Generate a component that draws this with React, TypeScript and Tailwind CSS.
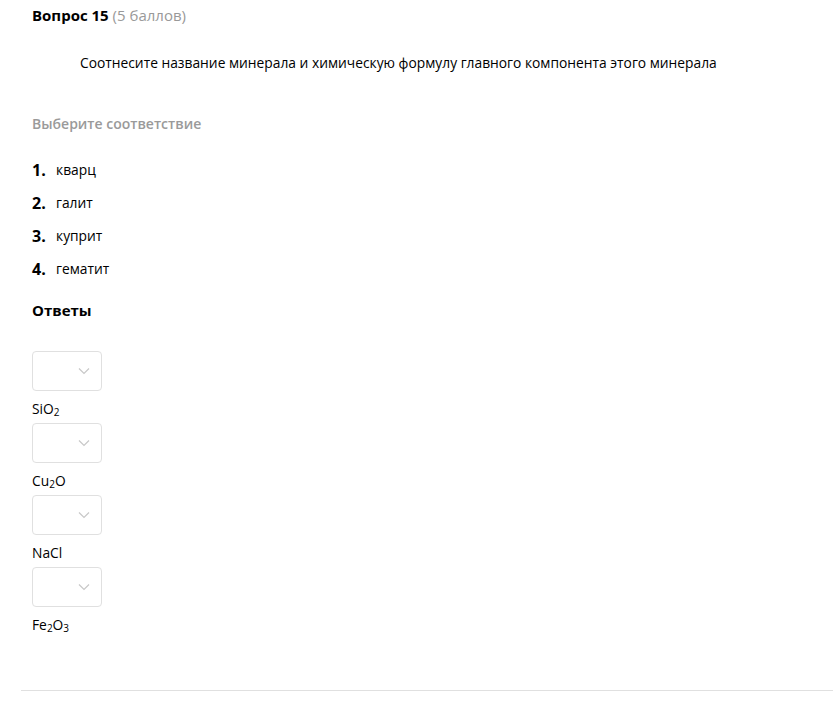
import React from 'react'

const items = ['кварц', 'галит', 'куприт', 'гематит']

const Chevron = () => (
    <svg width="12" height="8" viewBox="0 0 12 8" fill="none">
        <path d="M1 1.5l5 5 5-5" stroke="#c8c8c8" strokeWidth="1.2" />
    </svg>
)

const Select = () => (
    <div className="w-[70px] h-[40px] border border-[#e0e0e0] rounded-[4px] flex items-center justify-end pr-[11px] bg-white">
        <Chevron />
    </div>
)

const Sub = ({ children }: { children: React.ReactNode }) => (
    <span className="text-[10px] relative top-[2px]">{children}</span>
)

const answers: React.ReactNode[] = [
    <>SiO<Sub>2</Sub></>,
    <>Cu<Sub>2</Sub>O</>,
    <>NaCl</>,
    <>Fe<Sub>2</Sub>O<Sub>3</Sub></>,
]

const App = () => {
    return (
        <div className="bg-white min-h-[712px] text-black font-['Open_Sans',sans-serif] text-[13.8px] pt-[5px]">
            <div className="pl-[32px]">
                <div className="text-[15px] leading-[20px]">
                    <span className="font-bold">Вопрос 15</span>{' '}
                    <span className="text-[#999]">(5 баллов)</span>
                </div>
                <p className="pl-[48px] mt-[28px] leading-[20px]">
                    Соотнесите название минерала и химическую формулу главного компонента этого минерала
                </p>
                <div className="mt-[41px] font-semibold text-[14px] text-[#9a9a9a] leading-[20px]">Выберите соответствие</div>
                <div className="mt-[26px] flex flex-col gap-[13px]">
                    {items.map((it, i) => (
                        <div key={i} className="flex items-center h-[20px]">
                            <span className="font-bold text-[16px] w-[24px]">{i + 1}.</span>
                            <span>{it}</span>
                        </div>
                    ))}
                </div>
                <div className="mt-[21px] font-bold text-[15px] leading-[20px]">Ответы</div>
                <div className="mt-[31px] flex flex-col">
                    {answers.map((a, i) => (
                        <div key={i} className="flex flex-col">
                            <Select />
                            <div className="h-[32px] pt-[8px] leading-[20px]">{a}</div>
                        </div>
                    ))}
                </div>
            </div>
            <div className="ml-[21px] mt-[51px] border-t border-[#e0e0e0]"></div>
        </div>
    )
}

export default App
